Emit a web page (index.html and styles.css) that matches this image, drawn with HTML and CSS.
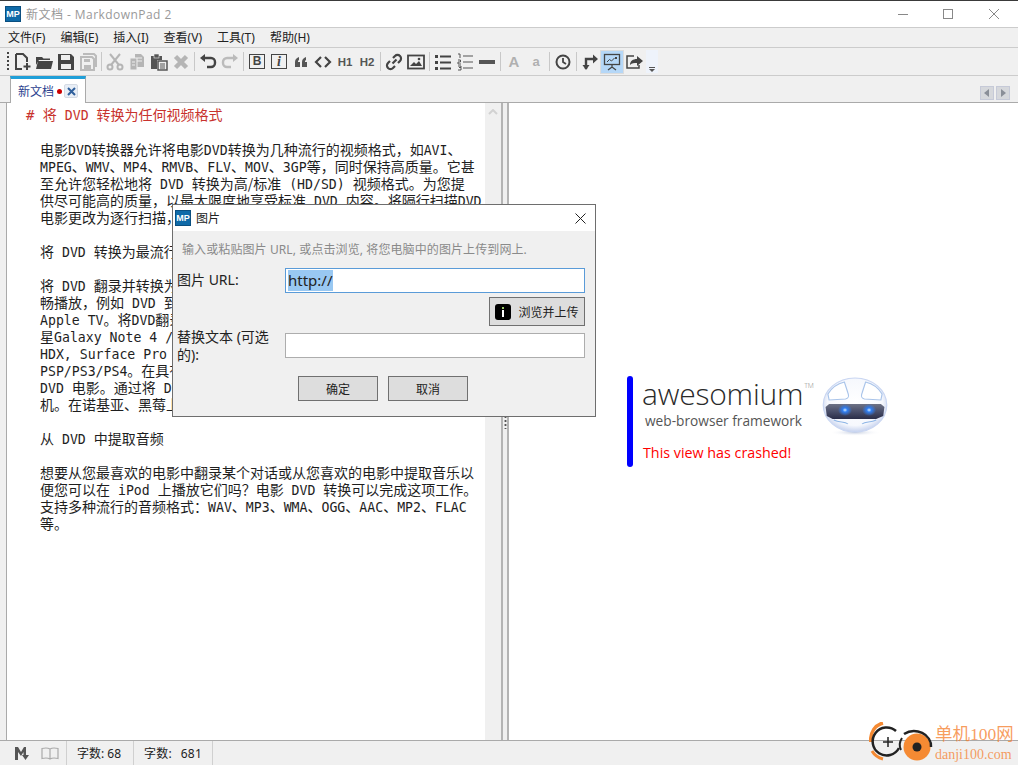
FILE: index.html
```html
<!DOCTYPE html>
<html lang="zh">
<head>
<meta charset="utf-8">
<title>新文档 - MarkdownPad 2</title>
<link rel="stylesheet" href="styles.css">
</head>
<body>
<div class="window">
  <header class="titlebar">
    <span class="mp">MP</span>
    <span class="title">新文档 - MarkdownPad 2</span>
    <div class="winctl">
      <svg width="46" height="27" viewBox="0 0 46 27"><path d="M19 13.5h10" stroke="#888" fill="none"/></svg>
      <svg width="46" height="27" viewBox="0 0 46 27"><rect x="18.5" y="8.5" width="9" height="9" stroke="#888" fill="none"/></svg>
      <svg width="46" height="27" viewBox="0 0 46 27"><path d="M18 8l10 10M28 8L18 18" stroke="#888" fill="none"/></svg>
    </div>
  </header>
  <nav class="menubar">
    <span>文件(F)</span><span>编辑(E)</span><span>插入(I)</span><span>查看(V)</span><span>工具(T)</span><span>帮助(H)</span>
  </nav>
  <div class="toolbar">
    <span class="grip"></span>
    <span class="tb"><svg viewBox="0 0 18 18"><path d="M3 1h7l4 4v4M3 1v15h6" fill="none" stroke="#444" stroke-width="2"/><path d="M14 10v7M10.500 13.500h7" stroke="#444" stroke-width="2"/></svg></span>
    <span class="tb"><svg viewBox="0 0 18 18"><path d="M1 4h6l1.500 1.500H15V7H4L1 12z" fill="#444"/><path d="M3 8h15l-2 8H1z" fill="#444"/></svg></span>
    <span class="tb"><svg viewBox="0 0 18 18"><path d="M1 1h13l3 3v13H1z" fill="#444"/><rect x="4" y="2" width="9" height="5" fill="#eee"/><rect x="4" y="11" width="10" height="5" fill="#eee"/></svg></span>
    <span class="tb"><svg viewBox="0 0 18 18"><path d="M4 1h11l2 2v10h-2M2 4h11l2 2v11H2z" fill="none" stroke="#bbb" stroke-width="2"/><rect x="5" y="12" width="7" height="4" fill="#bbb"/><rect x="5" y="6" width="6" height="3" fill="#bbb"/></svg></span>
    <span class="sep"></span>
    <span class="tb"><svg viewBox="0 0 18 18"><path d="M4 1l9 11M14 1L5 12" stroke="#b5b5b5" stroke-width="2" fill="none"/><circle cx="4" cy="14" r="2.500" fill="none" stroke="#b5b5b5" stroke-width="2"/><circle cx="14" cy="14" r="2.500" fill="none" stroke="#b5b5b5" stroke-width="2"/></svg></span>
    <span class="tb"><svg viewBox="0 0 18 18"><path d="M7 1h6l3 3v10H7z" fill="#b5b5b5"/><path d="M2 5h7v12H2z" fill="#b5b5b5" stroke="#eee"/><path d="M4 9h3M4 12h3M9 5h5M9 8h5" stroke="#eee"/></svg></span>
    <span class="tb"><svg viewBox="0 0 18 18"><path d="M1 3h11v4H7v9H1z" fill="#555"/><rect x="4" y="1" width="5" height="4" fill="#555" stroke="#eee" stroke-width=".6"/><path d="M8 8h9v9H8z" fill="#eee" stroke="#555" stroke-width="1.500"/><path d="M10 11h5M10 13h5M10 15h5" stroke="#555"/></svg></span>
    <span class="tb"><svg viewBox="0 0 18 18"><path d="M3.500 3.500l11 11M14.500 3.500l-11 11" stroke="#b5b5b5" stroke-width="4.500" fill="none"/></svg></span>
    <span class="sep"></span>
    <span class="tb"><svg viewBox="0 0 18 18"><path d="M5 5h7a4 4 0 0 1 4 4v1a4 4 0 0 1-4 4H8" fill="none" stroke="#444" stroke-width="2.400"/><path d="M1 5l5-4v8z" fill="#444"/></svg></span>
    <span class="tb"><svg viewBox="0 0 18 18"><path d="M13 5H6a4 4 0 0 0-4 4v1a4 4 0 0 0 4 4h4" fill="none" stroke="#bbb" stroke-width="2.400"/><path d="M17 5l-5-4v8z" fill="#bbb"/></svg></span>
    <span class="sep"></span>
    <span class="tb"><span class="boxed bold">B</span></span>
    <span class="tb"><span class="boxed ital">i</span></span>
    <span class="tb"><svg viewBox="0 0 18 18"><path d="M3 9c0-3 2-4 4-5v3c-1 .5-1 1-1 2h2v5H3zM10 9c0-3 2-4 4-5v3c-1 .5-1 1-1 2h2v5h-5z" fill="#555"/></svg></span>
    <span class="tb"><svg viewBox="0 0 18 18"><path d="M7 4L2 9l5 5M11 4l5 5-5 5" fill="none" stroke="#444" stroke-width="2.200"/></svg></span>
    <span class="tb hd">H1</span>
    <span class="tb hd">H2</span>
    <span class="sep"></span>
    <span class="tb"><svg viewBox="0 0 18 18"><path d="M7.500 10.500l4-4M8 5l2-2a3.500 3.500 0 0 1 5 5l-2 2M10 13l-2 2a3.500 3.500 0 0 1-5-5l2-2" fill="none" stroke="#444" stroke-width="2.200"/></svg></span>
    <span class="tb"><svg viewBox="0 0 18 18"><rect x="1" y="2.500" width="16" height="13" fill="none" stroke="#444" stroke-width="1.800"/><path d="M3 13l4-4 2 2 3-3 3 5z" fill="#444"/><circle cx="12" cy="6" r="1.300" fill="#444"/></svg></span>
    <span class="sep"></span>
    <span class="tb"><svg viewBox="0 0 18 18"><path d="M1 2h3v3H1zM1 8h3v3H1zM1 14h3v3H1z" fill="#444"/><path d="M6 3.500h11M6 9.500h11M6 15.500h11" stroke="#444" stroke-width="2"/></svg></span>
    <span class="tb"><svg viewBox="0 0 18 18"><path d="M2 1h2v4M2 7h2.500v2H2v2h3M2 13h3v1.500H3h2V17H2" fill="none" stroke="#555"/><path d="M7 3h10M7 9h10M7 15h10" stroke="#555"/></svg></span>
    <span class="tb"><svg viewBox="0 0 18 18"><rect x="1" y="7" width="16" height="4" fill="#555"/></svg></span>
    <span class="sep"></span>
    <span class="tb size big">A</span>
    <span class="tb size">a</span>
    <span class="sep"></span>
    <span class="tb"><svg viewBox="0 0 18 18"><circle cx="9" cy="9" r="6.500" fill="none" stroke="#444" stroke-width="2"/><path d="M9 5v4l3 2" fill="none" stroke="#444" stroke-width="1.800"/></svg></span>
    <span class="sep"></span>
    <span class="tb"><svg viewBox="0 0 18 18"><path d="M5 16V6h8" fill="none" stroke="#444" stroke-width="2.400"/><path d="M12 1.500l5 4.500-5 4.500zM1.500 12h7L5 17z" fill="#444"/></svg></span>
    <span class="tb on"><svg viewBox="0 0 18 18"><rect x="1.500" y="1.500" width="15" height="10" fill="none" stroke="#444" stroke-width="1.300"/><path d="M4 9l2.500-2.500 2 1.500 3-3" fill="none" stroke="#444"/><path d="M12 4h2v2h-2z" fill="#444"/><path d="M9 12v2M5 17l4-3 4 3" fill="none" stroke="#444" stroke-width="1.300"/></svg></span>
    <span class="tb"><svg viewBox="0 0 18 18"><path d="M9 3H2v12h12v-3" fill="none" stroke="#444" stroke-width="1.500"/><path d="M5 12c0-4 3-6 7-6V3l6 5-6 5v-3c-3 0-5 0-7 2z" fill="#444"/></svg></span>
    <span class="more"><svg width="6" height="5" viewBox="0 0 6 5"><path d="M0 .5h6" stroke="#555"/><path d="M0 2h6L3 5z" fill="#555"/></svg></span>
  </div>
  <div class="tabrow">
    <div class="tab">
      <span class="tabname">新文档</span><span class="dot"></span>
      <span class="tabclose"><svg width="9" height="9" viewBox="0 0 9 9"><path d="M1 1l7 7M8 1L1 8" stroke="#2f5f9c" stroke-width="2"/></svg></span>
    </div>
    <div class="tabnav">
      <span class="navbtn"><svg width="6" height="8" viewBox="0 0 6 8"><path d="M5 0v8L0 4z" fill="#8a8f98"/></svg></span>
      <span class="navbtn"><svg width="6" height="8" viewBox="0 0 6 8"><path d="M1 0v8l5-4z" fill="#8a8f98"/></svg></span>
    </div>
  </div>
  <main class="content">
    <section class="editor">
      <p class="h"># 将<span class="en"> DVD </span>转换为任何视频格式</p>
      <p>&nbsp;</p>
      <p class="b">电影<span class="en">DVD</span>转换器允许将电影<span class="en">DVD</span>转换为几种流行的视频格式，如<span class="en">AVI</span>、</p>
      <p class="b"><span class="en">MPEG</span>、<span class="en">WMV</span>、<span class="en">MP4</span>、<span class="en">RMVB</span>、<span class="en">FLV</span>、<span class="en">MOV</span>、<span class="en">3GP</span>等，同时保持高质量。它甚</p>
      <p class="b">至允许您轻松地将<span class="en"> DVD </span>转换为高/标准<span class="en"> (HD/SD) </span>视频格式。为您提</p>
      <p class="b">供尽可能高的质量，以最大限度地享受标准<span class="en"> DVD </span>内容。将隔行扫描<span class="en">DVD</span></p>
      <p class="b">电影更改为逐行扫描，以获得更好的图像效果。</p>
      <p>&nbsp;</p>
      <p class="b">将<span class="en"> DVD </span>转换为最流行的视频格式</p>
      <p>&nbsp;</p>
      <p class="b">将<span class="en"> DVD </span>翻录并转换为各种设备支持的格式，以便流</p>
      <p class="b">畅播放，例如<span class="en"> DVD </span>到<span class="en"> iPhone</span>、<span class="en">iPad</span></p>
      <p class="b"><span class="en">Apple TV</span>。将<span class="en">DVD</span>翻录到手机和平板电脑</p>
      <p class="b">星<span class="en">Galaxy Note 4 / S6</span></p>
      <p class="b"><span class="en">HDX, Surface Pro 3</span></p>
      <p class="b"><span class="en">PSP/PS3/PS4</span>。在具有这些设备上观看</p>
      <p class="b"><span class="en">DVD </span>电影。通过将<span class="en"> DVD </span>转换到手</p>
      <p class="b">机。在诺基亚、黑莓上观看。</p>
      <p>&nbsp;</p>
      <p class="b">从<span class="en"> DVD </span>中提取音频</p>
      <p>&nbsp;</p>
      <p class="b">想要从您最喜欢的电影中翻录某个对话或从您喜欢的电影中提取音乐以</p>
      <p class="b">便您可以在<span class="en"> iPod </span>上播放它们吗？电影<span class="en"> DVD </span>转换可以完成这项工作。</p>
      <p class="b">支持多种流行的音频格式：<span class="en">WAV</span>、<span class="en">MP3</span>、<span class="en">WMA</span>、<span class="en">OGG</span>、<span class="en">AAC</span>、<span class="en">MP2</span>、<span class="en">FLAC</span></p>
      <p class="b">等。</p>
    </section>
    <div class="scrollbar"><svg width="10" height="6" viewBox="0 0 10 6"><path d="M1 5l4-4 4 4" fill="none" stroke="#d2d2d2" stroke-width="2"/></svg></div>
    <div class="splitter"><span class="gripdots"></span></div>
    <section class="preview">
      <div class="crash">
        <div class="bluebar"></div>
        <div class="brand">
          <div class="aw">awesomium<sup>TM</sup></div>
          <div class="fw">web-browser framework</div>
          <div class="err">This view has crashed!</div>
        </div>
        <svg class="robot" width="80" height="60" viewBox="0 0 68 60" preserveAspectRatio="none">
          <defs>
            <radialGradient id="ball" cx=".5" cy=".45" r=".55"><stop offset="0" stop-color="#fff"/><stop offset=".78" stop-color="#f6f8fd"/><stop offset="1" stop-color="#c6d2ee"/></radialGradient>
            <radialGradient id="eye"><stop offset="0" stop-color="#d0eaff"/><stop offset=".35" stop-color="#2f7df0"/><stop offset="1" stop-color="#2f7df0" stop-opacity="0"/></radialGradient>
            <radialGradient id="sh"><stop offset="0" stop-color="#c4cde0"/><stop offset="1" stop-color="#fff" stop-opacity="0"/></radialGradient>
            <linearGradient id="visor" x1="0" y1="0" x2="0" y2="1"><stop offset="0" stop-color="#6d7285"/><stop offset=".5" stop-color="#4a4f6a"/><stop offset="1" stop-color="#2a2d48"/></linearGradient>
          </defs>
          <ellipse cx="34" cy="55.500" rx="22" ry="3.500" fill="url(#sh)"/>
          <circle cx="34" cy="28" r="27" fill="url(#ball)" stroke="#c9d6f2"/>
          <path d="M25 5c-7 2-11 6-14 12l1 6 14-1c3-1 3-3 2-6z M43 5c7 2 11 6 14 12l-1 6-14-1c-3-1-3-3-2-6z" fill="#fff" stroke="#a9c4ea" stroke-width="1"/>
          <path d="M12 27h44l3 3-1 9-6 3H15l-5-3-1-9z" fill="url(#visor)"/>
          <circle cx="25.500" cy="33" r="6" fill="url(#eye)"/><circle cx="46" cy="33" r="6" fill="url(#eye)"/>
          <path d="M16 43c5 3 9 1 12 4M52 43c-5 3-9 1-12 4" fill="none" stroke="#8fb6e6" stroke-width="1"/>
        </svg>
      </div>
    </section>
  </main>
  <footer class="statusbar">
    <div class="st-icons">
      <svg width="16" height="15" viewBox="0 0 16 15"><path d="M1 14V1h3l3 5 3-5h2v8h3l-3.500 5L8 9h1.500V6L7 10 4 6v8z" fill="#555"/></svg>
      <svg width="18" height="13" viewBox="0 0 18 13"><path d="M9 2C7 .8 4 .8 1 1.500v10c3-.7 6-.7 8 .5 2-1.200 5-1.200 8-.5v-10C14 .8 11 .8 9 2zM9 2v10" fill="none" stroke="#aaa" stroke-width="1.200"/></svg>
    </div>
    <div class="st-cell c1">字数: 68</div>
    <div class="st-cell c2">字数: &nbsp;681</div>
  </footer>
  <div class="watermark">
    <svg width="64" height="44" viewBox="0 0 64 44">
      <path d="M1.500 20C1.500 10 6 3 14 1" fill="none" stroke="#f58a33" stroke-width="3.500"/>
      <path d="M3 29c3 5 7 7 11 8" fill="none" stroke="#f58a33" stroke-width="3"/>
      <path d="M27 9a14 14 0 1 0 3 17" fill="none" stroke="#222" stroke-width="2.500"/>
      <path d="M19 15v10M14 20h10" stroke="#222" stroke-width="1.500"/>
      <circle cx="48" cy="25" r="13.500" fill="#f58a33"/>
      <path d="M35 12a17 15 0 0 1 27 13" fill="none" stroke="#222" stroke-width="2.500"/>
      <path d="M33 16c-2 3-3 8-1 12" fill="none" stroke="#222" stroke-width="2"/>
      <circle cx="48" cy="25" r="4.500" fill="#222"/>
    </svg>
    <div class="wm-text"><div class="wm1">单机100网</div><div class="wm2">danji100.com</div></div>
  </div>
  <div class="dialog">
    <div class="dlg-title">
      <span class="mp">MP</span>
      <span class="dlg-name">图片</span>
      <svg class="dlg-x" width="11" height="11" viewBox="0 0 11 11"><path d="M.5.500l10 10M10.500.5l-10 10" stroke="#222" fill="none"/></svg>
    </div>
    <div class="dlg-body">
      <p class="hint">输入或粘贴图片 URL, 或点击浏览, 将您电脑中的图片上传到网上.</p>
      <div class="row r-url">
        <label class="lab">图片 URL:</label>
        <div class="field focus"><span class="sel">http://</span></div>
      </div>
      <div class="row-end">
        <span class="btn browse"><span class="info"><svg width="4" height="10" viewBox="0 0 4 10"><rect x="1" y="0" width="2" height="2" fill="#9c6"/><rect x="1" y="3" width="2" height="7" fill="#fff"/></svg></span>浏览并上传</span>
      </div>
      <div class="row r-alt">
        <label class="lab alt">替换文本 (可选的):</label>
        <div class="field"></div>
      </div>
      <div class="actions">
        <span class="btn act">确定</span><span class="btn act">取消</span>
      </div>
    </div>
  </div>
</div>
</body>
</html>
```
FILE: styles.css
```css
* { box-sizing: border-box; }
html, body { margin: 0; padding: 0; height: 100%; overflow: hidden; }
body { font-family: "Noto Sans", "Noto Sans CJK SC", sans-serif; color: #222; background: #f0f0f0; }
p { margin: 0; }

.window { position: relative; width: 1018px; height: 765px; display: flex; flex-direction: column; background: #f0f0f0; border-top: 1px solid #3a3a3a; overflow: hidden; }

.titlebar { flex: 0 0 27px; height: 27px; background: #fff; border-bottom: 1px solid #ccc; display: flex; align-items: center; padding-left: 5px; }
.mp { width: 16px; height: 16px; flex: none; background: #0f6aa8; border: 1px solid #0a4f80; color: #fff; font: bold 9px/14px "Liberation Sans", sans-serif; text-align: center; }
.title { margin-left: 5px; font-size: 12px; letter-spacing: .45px; color: #999; font-family: "Open Sans", "Noto Sans CJK SC", sans-serif; white-space: nowrap; }
.winctl { margin-left: auto; display: flex; margin-right: 1px; }
.winctl svg { display: block; }

.menubar { flex: 0 0 20px; height: 20px; border-bottom: 1px solid #ccc; display: flex; gap: 15px; padding-left: 8px; align-items: center; font-size: 12px; line-height: 19px; color: #222; white-space: nowrap; }

.toolbar { flex: 0 0 28px; height: 28px; border-bottom: 1px solid #ccc; display: flex; align-items: center; padding-left: 5px; }
.grip { width: 6px; height: 21px; flex: none; background: radial-gradient(circle, #444 1.1px, transparent 1.3px) 0 0 / 6px 4px repeat-y; }
.tb { width: 22px; height: 22px; flex: none; display: flex; align-items: center; justify-content: center; }
.tb svg { width: 18px; height: 18px; display: block; }
.sep { width: 1px; height: 19px; margin: 0 2px; flex: none; background: #c8c8c8; }
.boxed { width: 16px; height: 15px; border: 1.5px solid #444; display: block; text-align: center; color: #444; font: bold 12px/13px "Liberation Sans", sans-serif; }
.bold { font-weight: 900; }
.ital { font-family: "Liberation Serif", serif; font-style: italic; font-size: 14px; }
.hd { font: bold 11.5px "Liberation Sans", sans-serif; color: #555; }
.size { font: bold 13px "Liberation Sans", sans-serif; color: #b0b0b0; }
.big { font-size: 15px; }
.on { background: #b5d7f7; outline: 1px solid #dcdcdc; }
.more { width: 12px; height: 23px; margin-left: 1px; background: #eef3fb; display: flex; align-items: flex-end; justify-content: center; padding-bottom: 1px; flex: none; }
.more svg { display: block; }

.tabrow { flex: 0 0 27px; height: 27px; border-bottom: 1px solid #aaa; display: flex; align-items: flex-end; padding-left: 10px; position: relative; }
.tab { width: 76px; height: 27px; margin-bottom: -1px; background: #fff; border: 1px solid #aaa; border-top: 3px solid #1f9fd8; border-bottom: 0; display: flex; align-items: center; padding-left: 7px; position: relative; }
.tabname { font-size: 12px; color: #2c3f8f; white-space: nowrap; }
.dot { width: 5px; height: 5px; margin-left: 3px; border-radius: 50%; background: #c00; flex: none; }
.tabclose { width: 14px; height: 14px; margin-left: 2px; background: #e8eef6; border: 1px solid #d5dbe4; border-radius: 2px; display: flex; align-items: center; justify-content: center; flex: none; }
.tabclose svg { display: block; }
.tabnav { margin-left: auto; margin-right: 8px; margin-bottom: 2px; display: flex; gap: 2px; }
.navbtn { width: 14px; height: 14px; background: #d6d8dc; border: 1px solid #c6cad8; display: flex; align-items: center; justify-content: center; }
.navbtn svg { display: block; }

.content { flex: 1 1 0; min-height: 0; display: flex; margin-left: 6px; border-left: 1px solid #aaa; background: #fff; }
.editor { width: 478px; flex: none; padding: 4px 0 0 19px; background: #fff; overflow: hidden; font-family: "Noto Sans CJK SC", sans-serif; font-size: 14px; line-height: 17px; color: #1e1e1e; white-space: nowrap; }
.editor p { height: 17px; }
.editor .en { font-family: "DejaVu Sans Mono", monospace; font-size: 13.2px; white-space: pre; }
.h { color: #c8322d; font-family: "DejaVu Sans Mono", "Noto Sans CJK SC", monospace; }
.h::first-letter { font-size: 13px; }
.b { margin-left: 14px; }
.scrollbar { width: 16px; flex: none; background: #f0f0f0; display: flex; justify-content: center; padding-top: 6px; align-items: flex-start; }
.scrollbar svg { display: block; }
.splitter { width: 8px; flex: none; background: #f0f0f0; border-left: 2px solid #b4b4b4; border-right: 2px solid #b4b4b4; display: flex; align-items: center; justify-content: center; }
.gripdots { width: 3px; height: 14px; background: radial-gradient(circle, #555 1px, transparent 1.2px) 0 0 / 3px 4px repeat-y; }
.preview { flex: 1 1 0; min-width: 0; background: #fff; display: flex; align-items: flex-start; padding: 273px 0 0 118px; }
.crash { display: flex; align-items: flex-start; }
.bluebar { width: 6px; height: 91px; background: #0000ff; border-radius: 3px; flex: none; }
.brand { margin-left: 9px; width: 181px; flex: none; }
.aw { font-family: "Open Sans", sans-serif; font-weight: 300; font-size: 30px; line-height: 36px; color: #2a2a2a; white-space: nowrap; letter-spacing: -.2px; }
.aw sup { font-size: 7px; line-height: 1; vertical-align: 17px; color: #888; margin-left: 1px; }
.fw { font-family: "Open Sans", sans-serif; font-size: 13.7px; line-height: 18px; color: #555; margin: 0 0 0 3px; white-space: nowrap; }
.err { font-family: "Open Sans", sans-serif; font-size: 14.3px; line-height: 20px; color: #f00; margin-top: 13px; margin-left: 1px; white-space: nowrap; }
.robot { margin-left: -8px; margin-top: 1px; flex: none; display: block; }

.statusbar { flex: 0 0 25px; height: 25px; border-top: 1px solid #aaa; display: flex; align-items: stretch; font-size: 12px; color: #222; }
.st-icons { width: 67px; flex: none; display: flex; align-items: center; padding-left: 14px; gap: 11px; border-right: 1px solid #d0d0d0; }
.st-icons svg { display: block; flex: none; }
.st-cell { display: flex; align-items: center; border-right: 1px solid #d0d0d0; padding-left: 10px; white-space: pre; flex: none; }
.c1 { width: 67px; }
.c2 { width: 79px; word-spacing: 1px; letter-spacing: .25px; }

.watermark { position: absolute; left: 869px; top: 721px; display: flex; align-items: flex-start; pointer-events: none; }
.watermark svg { display: block; flex: none; }
.wm-text { margin: 3px 0 0 2px; color: rgba(245, 130, 50, .78); white-space: nowrap; }
.wm1 { font-size: 17.5px; line-height: 19px; font-family: "Liberation Serif", "Noto Sans CJK SC", serif; }
.wm2 { font-size: 14px; line-height: 20px; margin-top: 1px; font-family: "Liberation Serif", serif; }

.dialog { position: absolute; left: 172px; top: 203px; width: 424px; height: 213px; background: #f0f0f0; border: 1px solid #6e6e6e; display: flex; flex-direction: column; }
.dlg-title { height: 26px; flex: none; background: #fff; display: flex; align-items: center; padding-left: 2px; }
.dlg-name { margin-left: 5px; font-size: 12px; color: #222; }
.dlg-x { margin-left: auto; margin-right: 9px; display: block; }
.dlg-body { flex: 1 1 0; padding: 10px 10px 0 4px; display: flex; flex-direction: column; }
.hint { font-size: 12px; letter-spacing: .1px; line-height: 18px; color: #8a8a8a; margin-left: 5px; white-space: nowrap; }
.row { display: flex; align-items: flex-start; }
.lab { width: 108px; flex: none; font-size: 14px; line-height: 18px; color: #222; }
.r-url { margin-top: 9px; }
.r-url .lab { padding-top: 3px; }
.field { flex: 1 1 0; height: 25px; background: #fff; border: 1px solid #adadad; padding: 0 2px; font-size: 15px; line-height: 21px; }
.focus { border-color: #5a9bd8; }
.sel { display: inline-block; background: #99c8f2; color: #222; height: 21px; margin-top: 1px; }
.row-end { display: flex; justify-content: flex-end; margin-top: 4px; }
.btn { display: flex; align-items: center; justify-content: center; background: #ddd; border: 1px solid #707070; font-size: 12px; color: #222; }
.browse { width: 96px; height: 29px; }
.info { width: 16px; height: 16px; margin-right: 7px; background: #000; border-radius: 3px; display: flex; align-items: center; justify-content: center; flex: none; }
.info svg { display: block; }
.r-alt { margin-top: 7px; }
.lab.alt { padding-right: 2px; margin-top: -5px; }
.actions { display: flex; gap: 10px; margin: 12px 0 0 121px; }
.act { width: 80px; height: 25px; }
```
